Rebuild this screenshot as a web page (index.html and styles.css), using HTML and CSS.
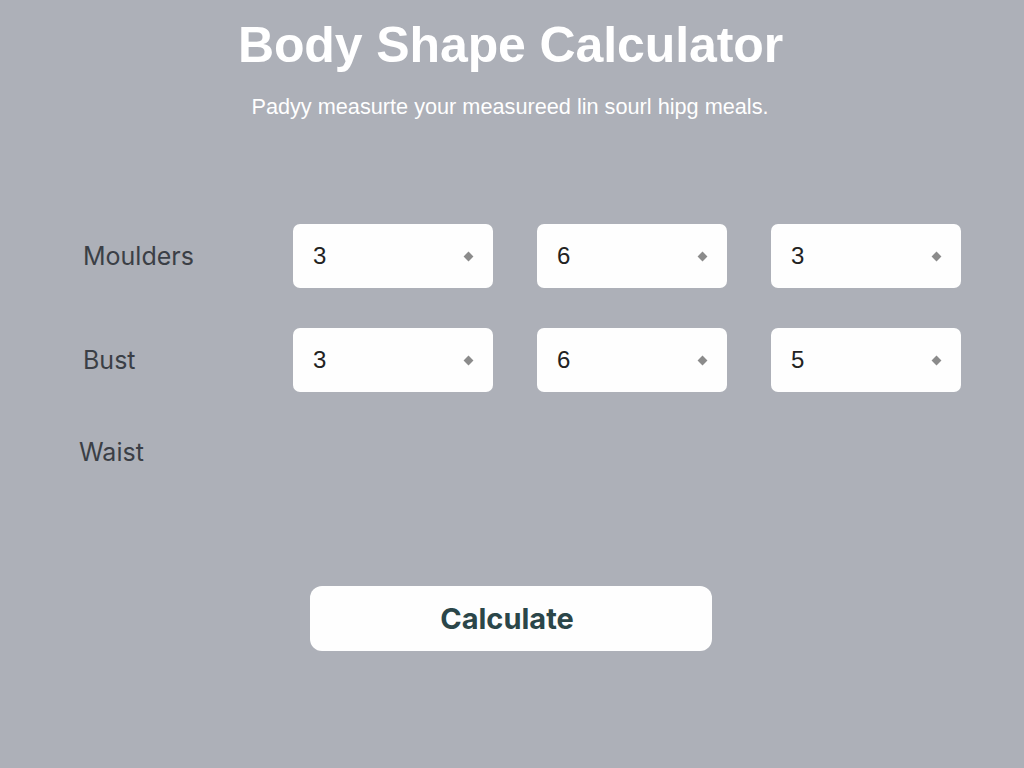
FILE: index.html
```html
<!DOCTYPE html>
<html lang="en">
<head>
  <meta charset="UTF-8">
  <meta name="viewport" content="width=device-width, initial-scale=1.0">
  <title>Body Shape Calculator</title>
  <link rel="stylesheet" href="styles.css">
</head>
<body>
  <div class="page">
    <header class="header">
      <h1>Body Shape Calculator</h1>
      <p class="subtitle">Padyy measurte your measureed lin sourl hipg meals.</p>
    </header>

    <form class="calc-form">
      <div class="grid">
        <label class="row-label">Moulders</label>
        <div class="field"><span class="value">3</span><span class="spin"></span></div>
        <div class="field"><span class="value">6</span><span class="spin"></span></div>
        <div class="field"><span class="value">3</span><span class="spin"></span></div>

        <label class="row-label">Bust</label>
        <div class="field"><span class="value">3</span><span class="spin"></span></div>
        <div class="field"><span class="value">6</span><span class="spin"></span></div>
        <div class="field"><span class="value">5</span><span class="spin"></span></div>
      </div>

      <label class="row-label waist">Waist</label>

      <button type="button" class="calc-btn">Calculate</button>
    </form>
  </div>
</body>
</html>
```

FILE: styles.css
```css
body {
  margin: 0;
  background-color: #adb0b8;
  font-family: 'Liberation Sans', Arial, sans-serif;
  height: 768px;
  overflow: hidden;
}

.page {
  display: flex;
  flex-direction: column;
}

.header {
  text-align: center;
  padding-top: 16px;
}

.header h1 {
  margin: 0;
  padding-right: 3px;
  font-size: 50px;
  font-weight: 700;
  color: #ffffff;
  line-height: 58px;
  letter-spacing: -0.1px;
}

.subtitle {
  margin: 20px 0 0;
  padding-right: 4px;
  font-size: 21.7px;
  color: #ffffff;
  line-height: 26px;
}

.calc-form {
  display: flex;
  flex-direction: column;
  padding-left: 83px;
  margin-top: 104px;
}

.grid {
  display: grid;
  grid-template-columns: 166px 200px 190px 190px;
  grid-auto-rows: 64px;
  column-gap: 44px;
  row-gap: 40px;
  align-items: center;
}

.row-label {
  font-family: 'Inter', sans-serif;
  font-size: 25px;
  color: #3b3f46;
}

.field {
  height: 64px;
  background-color: #fefefe;
  border-radius: 7px;
  display: flex;
  align-items: center;
  justify-content: space-between;
  padding: 0 21px 0 20px;
  box-sizing: border-box;
}

.value {
  font-size: 24px;
  color: #222222;
}

.spin {
  width: 7px;
  height: 7px;
  background-color: #8b8b8b;
  transform: rotate(45deg);
}

.waist {
  margin-left: -4px;
  line-height: 40px;
  margin-top: 40px;
}

.calc-btn {
  align-self: flex-start;
  margin-left: 227px;
  margin-top: 114px;
  width: 402px;
  height: 65px;
  border: none;
  border-radius: 12px;
  background-color: #fefefe;
  font-family: 'Inter', sans-serif;
  font-size: 29px;
  font-weight: 700;
  color: #2b4649;
  padding: 0 8px 0 0;
  cursor: pointer;
}
```
